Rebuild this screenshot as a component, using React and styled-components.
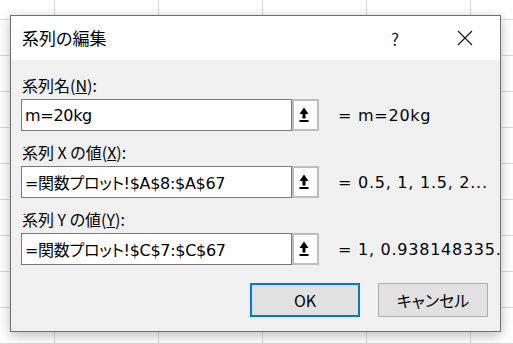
import React from 'react'
import styled, { createGlobalStyle } from 'styled-components'

const GlobalStyle = createGlobalStyle`
  html, body { margin: 0; padding: 0; }
  body {
    width: 513px;
    height: 344px;
    overflow: hidden;
    background-color: #fff;
    background-image:
      linear-gradient(to right, #d9d9d9 1px, transparent 1px),
      linear-gradient(to bottom, #d9d9d9 1px, transparent 1px);
    background-size: 104px 36px;
    background-position: 54px 19px;
    font-family: "Noto Sans CJK JP", "Noto Sans", sans-serif;
    font-feature-settings: "palt";
    color: #000;
  }
`

const Dialog = styled.div`
  margin: 15px 0 0 10px;
  width: 491px;
  height: 317px;
  box-sizing: border-box;
  border: 1px solid #6e6e6e;
  background: #f0f0f0;
  box-shadow: 0 3px 12px rgba(0, 0, 0, 0.28);
  display: flex;
  flex-direction: column;
  overflow: hidden;
`

const TitleBar = styled.div`
  height: 44px;
  flex: none;
  background: #fff;
  display: flex;
  align-items: center;
  padding-left: 11px;
`

const Title = styled.div`
  flex: 1;
  font-size: 17px;
  line-height: 20px;
`

const TitleButton = styled.div`
  width: 70px;
  height: 44px;
  display: flex;
  align-items: center;
  justify-content: center;
  font-size: 17px;
  color: #222;
`

const Body = styled.div`
  flex: 1;
  padding: 0 12px 0 10px;
  display: flex;
  flex-direction: column;
`

const Label = styled.div`
  height: ${p => p.$tall ? 39 : 35}px;
  box-sizing: border-box;
  display: flex;
  align-items: flex-end;
  padding: 0 0 4px 1px;
  font-size: 16px;
  line-height: 20px;
  white-space: pre;
`

const Field = styled.div`
  height: 32px;
  display: flex;
  align-items: center;
`

const valueFont = `
  font-family: "DejaVu Sans", "Noto Sans CJK JP", sans-serif;
  font-size: 16px;
  white-space: nowrap;
`

const InputBox = styled.div`
  width: 271px;
  height: 32px;
  flex: none;
  box-sizing: border-box;
  border: 1px solid #7a7a7a;
  background: #fff;
  display: flex;
  align-items: center;
  padding-left: 3px;
  overflow: hidden;
  letter-spacing: -0.3px;
  ${valueFont}
`

const RefButton = styled.div`
  width: 27px;
  height: 32px;
  box-sizing: border-box;
  border: 2px solid #bdbdbd;
  background: #fdfdfd;
  display: flex;
  align-items: center;
  justify-content: center;
  padding-right: 3px;
  flex: none;
`

const Preview = styled.div`
  margin-left: 19px;
  flex: none;
  letter-spacing: 0.75px;
  ${valueFont}
`

const Buttons = styled.div`
  margin-top: 18px;
  display: flex;
  justify-content: flex-end;
  gap: 18px;
`

const Button = styled.div`
  width: 110px;
  height: 34px;
  box-sizing: border-box;
  border: ${p => p.$default ? '2px solid #0078d7' : '1px solid #adadad'};
  background: #e1e1e1;
  display: flex;
  align-items: center;
  justify-content: center;
  font-size: 16px;
`

const CloseIcon = () => (
  <svg width="16" height="16" viewBox="0 0 16 16">
    <path d="M1 1L15 15M15 1L1 15" stroke="#111" strokeWidth="1.1" fill="none" />
  </svg>
)

const CollapseIcon = () => (
  <svg width="10" height="16" viewBox="0 0 10 16">
    <path d="M5 0.5L0.5 7H3.5V11.5H6.5V7H9.5Z" fill="#000" />
    <rect x="0.5" y="13" width="9" height="2" fill="#000" />
  </svg>
)

const rows = [
  { label: <>系列名(<u>N</u>):</>, value: 'm=20kg', preview: '= m=20kg' },
  { label: <>系列 X の値(<u>X</u>):</>, value: '=関数プロット!$A$8:$A$67', preview: '= 0.5, 1, 1.5, 2...' },
  { label: <>系列 Y の値(<u>Y</u>):</>, value: '=関数プロット!$C$7:$C$67', preview: '= 1, 0.938148335...' },
]

export default function App() {
  return (
    <>
      <GlobalStyle />
      <Dialog>
        <TitleBar>
          <Title>系列の編集</Title>
          <TitleButton>?</TitleButton>
          <TitleButton><CloseIcon /></TitleButton>
        </TitleBar>
        <Body>
          {rows.map((r, i) => (
            <React.Fragment key={i}>
              <Label $tall={i === 0}>{r.label}</Label>
              <Field>
                <InputBox>{r.value}</InputBox>
                <RefButton><CollapseIcon /></RefButton>
                <Preview>{r.preview}</Preview>
              </Field>
            </React.Fragment>
          ))}
          <Buttons>
            <Button $default>OK</Button>
            <Button>キャンセル</Button>
          </Buttons>
        </Body>
      </Dialog>
    </>
  )
}
